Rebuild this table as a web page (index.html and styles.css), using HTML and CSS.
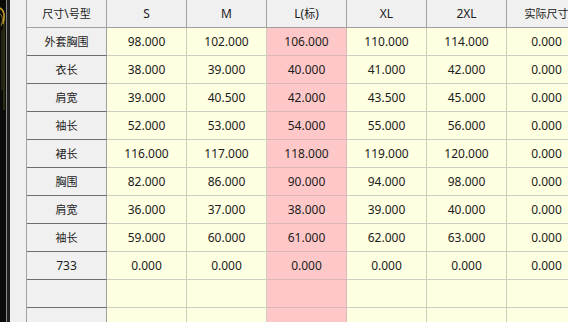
FILE: index.html
```html
<!DOCTYPE html>
<html lang="zh">
<head>
<meta charset="utf-8">
<link rel="stylesheet" href="styles.css">
</head>
<body>
<div class="frame">
  <div class="decor">
    <svg width="10" height="322" viewBox="0 0 10 322">
      <rect x="0" y="0" width="6" height="322" fill="#0a0a08"/>
      <path d="M0 8 C4 10 5 16 3 24" stroke="#c9a227" stroke-width="1.6" fill="none"/>
      <path d="M0 14 C3 16 3 20 1 26" stroke="#8f7a2a" stroke-width="1" fill="none"/>
      <path d="M4 22 L4 110" stroke="#5e5a2c" stroke-width="0.8" fill="none"/>
      <path d="M2 30 L2 90" stroke="#4a4626" stroke-width="0.8" fill="none"/>
      <rect x="6" y="0" width="1" height="322" fill="#8a8a8a"/>
      <rect x="7" y="0" width="3" height="322" fill="#1e2022"/>
    </svg>
  </div>
  <div class="gutter"></div>
  <table class="grid">
    <thead>
      <tr>
        <th class="rh"><span class="cn">尺寸</span>\<span class="cn">号型</span></th>
        <th>S</th><th>M</th><th>L(<span class="cn">标</span>)</th><th>XL</th><th>2XL</th><th><span class="cn">实际尺寸</span></th>
      </tr>
    </thead>
    <tbody>
      <tr><th class="rh"><span class="cn">外套胸围</span></th><td>98.000</td><td>102.000</td><td class="std">106.000</td><td>110.000</td><td>114.000</td><td>0.000</td></tr>
      <tr><th class="rh"><span class="cn">衣长</span></th><td>38.000</td><td>39.000</td><td class="std">40.000</td><td>41.000</td><td>42.000</td><td>0.000</td></tr>
      <tr><th class="rh"><span class="cn">肩宽</span></th><td>39.000</td><td>40.500</td><td class="std">42.000</td><td>43.500</td><td>45.000</td><td>0.000</td></tr>
      <tr><th class="rh"><span class="cn">袖长</span></th><td>52.000</td><td>53.000</td><td class="std">54.000</td><td>55.000</td><td>56.000</td><td>0.000</td></tr>
      <tr><th class="rh"><span class="cn">裙长</span></th><td>116.000</td><td>117.000</td><td class="std">118.000</td><td>119.000</td><td>120.000</td><td>0.000</td></tr>
      <tr><th class="rh"><span class="cn">胸围</span></th><td>82.000</td><td>86.000</td><td class="std">90.000</td><td>94.000</td><td>98.000</td><td>0.000</td></tr>
      <tr><th class="rh"><span class="cn">肩宽</span></th><td>36.000</td><td>37.000</td><td class="std">38.000</td><td>39.000</td><td>40.000</td><td>0.000</td></tr>
      <tr><th class="rh"><span class="cn">袖长</span></th><td>59.000</td><td>60.000</td><td class="std">61.000</td><td>62.000</td><td>63.000</td><td>0.000</td></tr>
      <tr><th class="rh">733</th><td>0.000</td><td>0.000</td><td class="std">0.000</td><td>0.000</td><td>0.000</td><td>0.000</td></tr>
      <tr><th class="rh"></th><td></td><td></td><td class="std"></td><td></td><td></td><td></td></tr>
      <tr><th class="rh"></th><td></td><td></td><td class="std"></td><td></td><td></td><td></td></tr>
    </tbody>
  </table>
</div>
</body>
</html>
```

FILE: styles.css
```css
html, body {
  margin: 0;
  padding: 0;
  width: 568px;
  height: 322px;
  overflow: hidden;
  background: #f0f0f0;
}

.frame {
  display: flex;
  align-items: flex-start;
  height: 322px;
  overflow: hidden;
  font-family: "Noto Sans", "Noto Sans CJK SC", sans-serif;
  font-size: 12px;
  color: #1c1c1c;
}

.cn {
  font-family: "Noto Sans CJK SC", sans-serif;
  font-size: 11px;
}

.decor {
  width: 10px;
  height: 322px;
  flex: none;
}

.decor svg {
  display: block;
}

.gutter {
  width: 16px;
  height: 322px;
  flex: none;
  background: #f0f0f0;
  border-right: 1px solid #a0a0a0;
}

.grid {
  flex: none;
  border-collapse: separate;
  border-spacing: 0;
  table-layout: fixed;
  width: 560px;
}

.grid th,
.grid td {
  box-sizing: border-box;
  width: 80px;
  height: 28px;
  padding: 0;
  text-align: center;
  vertical-align: middle;
  font-weight: normal;
  white-space: nowrap;
  overflow: hidden;
  line-height: 26px;
}

.grid thead th {
  background: #f0f0f0;
  border-right: 1px solid #a0a0a0;
  border-bottom: 1px solid #a0a0a0;
}

.grid tbody th.rh {
  background: #f0f0f0;
  border-right: 1px solid #a0a0a0;
  border-bottom: 1px solid #6e6e6e;
}

.grid td {
  background: #ffffe1;
  border-right: 1px solid #cfcdbf;
  border-bottom: 1px solid #cfcdbf;
  padding-top: 1px;
}

.grid td.std {
  background: #ffc8c8;
  border-right-color: #d9b8b8;
  border-bottom-color: #d9b8b8;
}
```
